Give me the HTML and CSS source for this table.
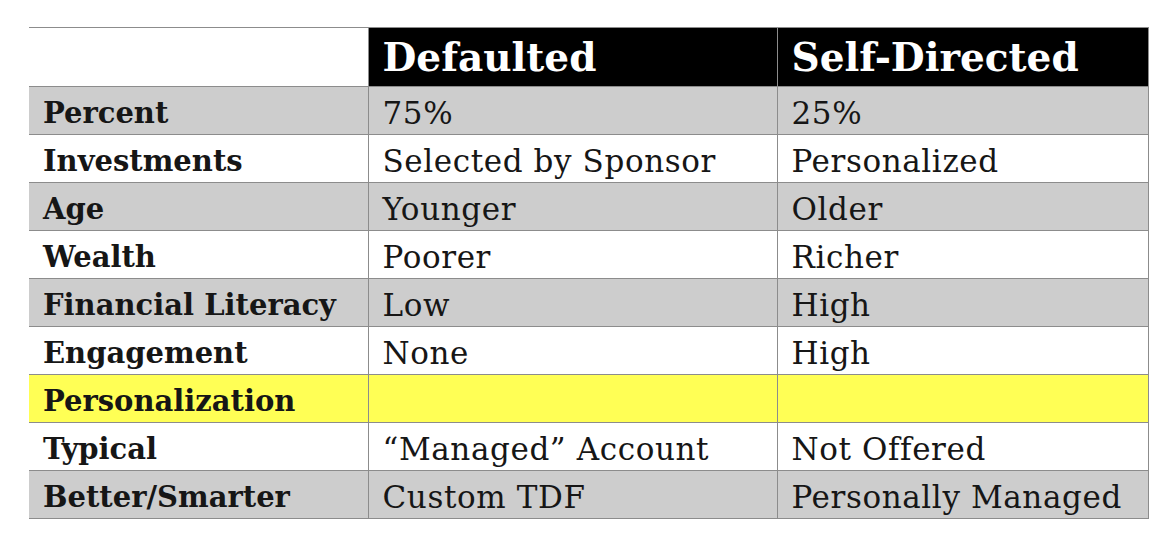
FILE: index.html
```html
<!DOCTYPE html>
<html>
<head>
<meta charset="utf-8">
<link rel="stylesheet" href="styles.css">
</head>
<body>
<table class="grid">
  <colgroup>
    <col class="c1"><col class="c2"><col class="c3">
  </colgroup>
  <thead>
    <tr class="head">
      <th class="blank"></th>
      <th>Defaulted</th>
      <th>Self-Directed</th>
    </tr>
  </thead>
  <tbody>
    <tr class="gray"><th>Percent</th><td>75%</td><td>25%</td></tr>
    <tr><th>Investments</th><td>Selected by Sponsor</td><td>Personalized</td></tr>
    <tr class="gray"><th>Age</th><td>Younger</td><td>Older</td></tr>
    <tr><th>Wealth</th><td>Poorer</td><td>Richer</td></tr>
    <tr class="gray"><th>Financial Literacy</th><td>Low</td><td>High</td></tr>
    <tr><th>Engagement</th><td>None</td><td>High</td></tr>
    <tr class="yellow"><th>Personalization</th><td></td><td></td></tr>
    <tr><th>Typical</th><td>“Managed” Account</td><td>Not Offered</td></tr>
    <tr class="gray"><th>Better/Smarter</th><td>Custom TDF</td><td>Personally Managed</td></tr>
  </tbody>
</table>
</body>
</html>
```
FILE: styles.css
```css
html, body {
  margin: 0;
  padding: 0;
  background: #ffffff;
}
body {
  padding: 27px 0 0 29px;
  font-family: "DejaVu Serif", "Liberation Serif", serif;
  color: #161616;
}
.grid {
  border-collapse: collapse;
  table-layout: fixed;
  width: 1119px;
}
.c1 { width: 339px; }
.c2 { width: 409px; }
.c3 { width: 371px; }
.grid th, .grid td {
  padding: 5px 0 0 14px;
  text-align: left;
  white-space: nowrap;
  border-bottom: 1px solid #8c8c8c;
  line-height: 1;
}
.grid th { font-weight: bold; font-size: 29px; }
.grid td { font-weight: normal; font-size: 31px; letter-spacing: 0.6px; }
.grid td, .grid .head th:not(.blank) {
  border-left: 1px solid #8c8c8c;
}
.grid tr > *:last-child { border-right: 1px solid #8c8c8c; }
.grid tr > *:first-child { border-right: none; }
.head th {
  height: 59px;
  border-top: 1px solid #8c8c8c;
  background: #000000;
  color: #ffffff;
  font-size: 39px;
  vertical-align: bottom;
  padding: 0 0 9px 14px;
  box-sizing: border-box;
}
.head th.blank {
  background: #ffffff;
}
tbody tr { height: 48px; }
tbody th, tbody td { vertical-align: middle; }
.gray th, .gray td { background: #cdcdcd; }
.yellow th, .yellow td { background: #ffff55; }
```
